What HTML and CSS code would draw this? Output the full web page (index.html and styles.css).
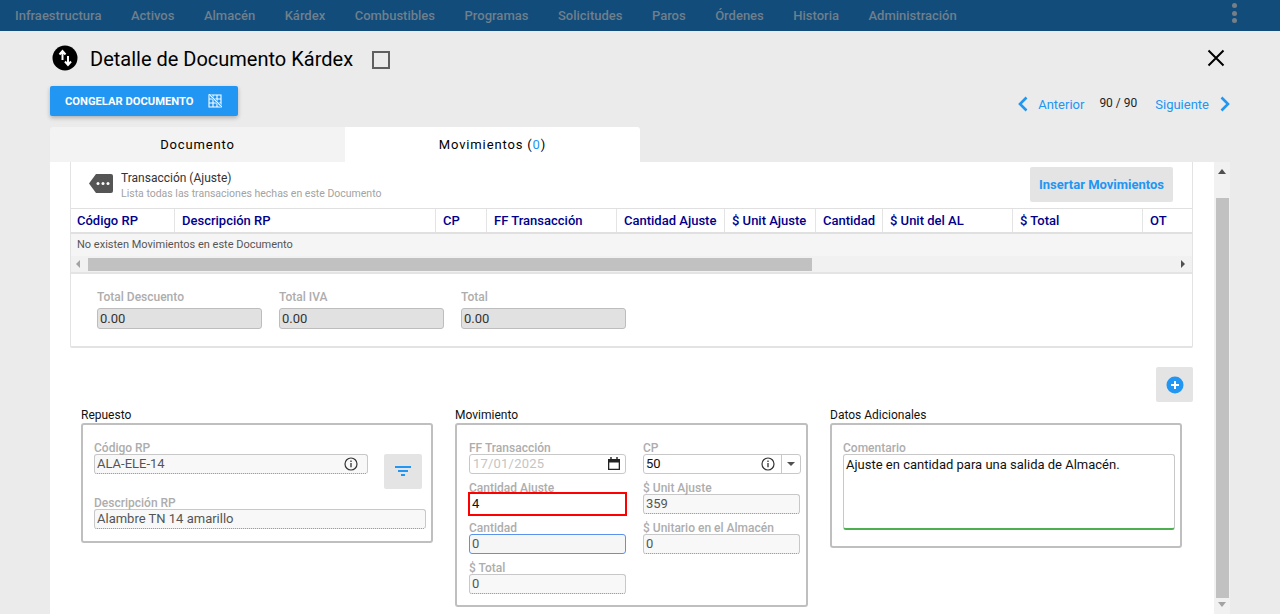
FILE: index.html
```html
<!DOCTYPE html>
<html>
<head>
  <title>Detalle de Documento Kardex</title>
  <link rel="stylesheet" href="styles.css">
</head>
<body>

<div class="topbar">
  <nav class="menu">
    <span>Infraestructura</span>
    <span>Activos</span>
    <span>Almacén</span>
    <span>Kárdex</span>
    <span>Combustibles</span>
    <span>Programas</span>
    <span>Solicitudes</span>
    <span>Paros</span>
    <span>Órdenes</span>
    <span>Historia</span>
    <span>Administración</span>
  </nav>
  <div class="kebab"><i></i><i></i><i></i></div>
</div>

<div class="sheet">
  <div class="title-row">
    <svg class="title-icon" viewBox="0 0 26 26" width="26" height="26">
      <circle cx="13" cy="13" r="12.500" fill="#000"/>
      <path d="M10.500 15V6.500M7.500 9.500l3-3.500 3 3.500M16 11v8.500M13 16.500l3 3.500 3-3.500" fill="none" stroke="#fff" stroke-width="2"/>
    </svg>
    <h1>Detalle de Documento Kárdex</h1>
    <div class="check"></div>
    <svg class="close" viewBox="0 0 18 18" width="18" height="18">
      <path d="M1.500 1.500l15 15M16.500 1.500l-15 15" stroke="#000" stroke-width="2" fill="none"/>
    </svg>
  </div>

  <div class="action-row">
    <button class="freeze">
      <span>CONGELAR DOCUMENTO</span>
      <svg viewBox="0 0 14 14" width="14" height="14">
        <path d="M1 1h12v12H1zM1 5h12M1 9h12M5 1v12M9 1v12" fill="none" stroke="#fff" stroke-width="1.100"/>
        <path d="M2 1l12 12" stroke="#2196f3" stroke-width="2.400"/>
        <path d="M1 0l13 13" stroke="#fff" stroke-width="1.100"/>
      </svg>
    </button>
    <div class="pager">
      <svg viewBox="0 0 11 16" width="11" height="16"><path d="M9.500 1.500L3 8l6.500 6.500" fill="none" stroke="#2196f3" stroke-width="2.600"/></svg>
      <a class="pager-prev">Anterior</a>
      <span class="pager-count">90 / 90</span>
      <a class="pager-next">Siguiente</a>
      <svg viewBox="0 0 11 16" width="11" height="16"><path d="M1.500 1.500L8 8l-6.500 6.500" fill="none" stroke="#2196f3" stroke-width="2.600"/></svg>
    </div>
  </div>

  <div class="tabs">
    <div class="tab">Documento</div>
    <div class="tab active">Movimientos (<b>0</b>)</div>
  </div>

  <div class="panel">
    <div class="content">
      <div class="card">
        <div class="card-head">
          <svg class="tag" viewBox="0 0 24 19" width="24" height="19">
            <path d="M7 0h15a2 2 0 0 1 2 2v15a2 2 0 0 1-2 2H7L0 9.500z" fill="#555"/>
            <circle cx="9" cy="9.500" r="1.500" fill="#fff"/><circle cx="14" cy="9.500" r="1.500" fill="#fff"/><circle cx="19" cy="9.500" r="1.500" fill="#fff"/>
          </svg>
          <div class="card-title">
            <div>Transacción (Ajuste)</div>
            <small>Lista todas las transaciones hechas en este Documento</small>
          </div>
          <button class="btn-grey">Insertar Movimientos</button>
        </div>

        <div class="grid-head">
          <div>Código RP</div>
          <div>Descripción RP</div>
          <div>CP</div>
          <div>FF Transacción</div>
          <div>Cantidad Ajuste</div>
          <div>$ Unit Ajuste</div>
          <div>Cantidad</div>
          <div>$ Unit del AL</div>
          <div>$ Total</div>
          <div>OT</div>
        </div>
        <div class="grid-empty">No existen Movimientos en este Documento</div>
        <div class="hscroll">
          <i class="arrow-left"></i>
          <div class="hthumb"></div>
          <i class="arrow-right"></i>
        </div>

        <div class="totals">
          <div class="total">
            <label>Total Descuento</label>
            <div class="total-box">0.00</div>
          </div>
          <div class="total">
            <label>Total IVA</label>
            <div class="total-box">0.00</div>
          </div>
          <div class="total">
            <label>Total</label>
            <div class="total-box">0.00</div>
          </div>
        </div>
      </div>

      <div class="add-row">
        <button class="btn-add">
          <svg viewBox="0 0 18 18" width="18" height="18">
            <circle cx="9" cy="9" r="8.500" fill="#2196f3"/>
            <path d="M9 5v8M5 9h8" stroke="#fff" stroke-width="2"/>
          </svg>
        </button>
      </div>

      <div class="groups">
        <div class="group">
          <div class="group-name">Repuesto</div>
          <div class="group-box repuesto">
            <div class="rp-top">
              <div class="field rp-code">
                <label>Código RP</label>
                <div class="input locked">ALA-ELE-14
                  <svg class="info" viewBox="0 0 14 14" width="14" height="14"><circle cx="7" cy="7" r="6" fill="none" stroke="#333" stroke-width="1.200"/><path d="M7 6v4.200M7 3.600v1.300" stroke="#333" stroke-width="1.300"/></svg>
                </div>
              </div>
              <button class="btn-filter">
                <svg viewBox="0 0 16 10" width="16" height="10"><path d="M0 1h16M3 5h10M6 9h4" stroke="#2196f3" stroke-width="2"/></svg>
              </button>
            </div>
            <div class="field">
              <label>Descripción RP</label>
              <div class="input locked">Alambre TN 14 amarillo</div>
            </div>
          </div>
        </div>

        <div class="group">
          <div class="group-name">Movimiento</div>
          <div class="group-box movimiento">
            <div class="field">
              <label>FF Transacción</label>
              <div class="input date">17/01/2025
                <svg class="cal" viewBox="0 0 12 13" width="12" height="13"><path d="M0 2h12v11H0zM1.300 5.500v6.200h9.400V5.500z" fill="#222" fill-rule="evenodd"/><path d="M3 0v2M9 0v2" stroke="#222" stroke-width="1.400"/></svg>
              </div>
            </div>
            <div class="field">
              <label>CP</label>
              <div class="input select">50
                <svg class="info" viewBox="0 0 14 14" width="14" height="14"><circle cx="7" cy="7" r="6" fill="none" stroke="#333" stroke-width="1.200"/><path d="M7 6v4.200M7 3.600v1.300" stroke="#333" stroke-width="1.300"/></svg>
                <span class="select-btn"><i></i></span>
              </div>
            </div>
            <div class="field">
              <label>Cantidad Ajuste</label>
              <div class="input required">4</div>
            </div>
            <div class="field">
              <label>$ Unit Ajuste</label>
              <div class="input locked">359</div>
            </div>
            <div class="field">
              <label>Cantidad</label>
              <div class="input locked focused">0</div>
            </div>
            <div class="field">
              <label>$ Unitario en el Almacén</label>
              <div class="input locked">0</div>
            </div>
            <div class="field">
              <label>$ Total</label>
              <div class="input locked">0</div>
            </div>
          </div>
        </div>

        <div class="group">
          <div class="group-name">Datos Adicionales</div>
          <div class="group-box adicionales">
            <div class="field">
              <label>Comentario</label>
              <div class="textarea">Ajuste en cantidad para una salida de Almacén.</div>
            </div>
          </div>
        </div>
      </div>
    </div>

    <div class="vscroll">
      <i class="arrow-up"></i>
      <div class="vthumb"></div>
      <i class="arrow-down"></i>
    </div>
  </div>
</div>

</body>
</html>
```

FILE: styles.css
```css
* { box-sizing: border-box; }

html, body {
  margin: 0;
  height: 614px;
  overflow: hidden;
}
body {
  background-color: #ebebeb;
  font-family: Roboto, "Liberation Sans", sans-serif;
  font-size: 13px;
  color: #000;
}
button {
  border: 0;
  font-family: inherit;
  padding: 0;
}

/* top bar */
.topbar {
  height: 31px;
  background-color: #124c7b;
  display: flex;
  align-items: center;
  padding: 0 43px 0 15px;
}
.menu {
  display: flex;
  gap: 29.500px;
  flex: 1;
  font-size: 13px;
  font-weight: 500;
  color: #6f7f8b;
}
.kebab {
  display: flex;
  flex-direction: column;
  gap: 2.500px;
  margin-top: -5px;
}
.kebab i {
  width: 5px;
  height: 5px;
  border-radius: 50%;
  background-color: #757f88;
}

/* title and actions */
.sheet {
  height: 583px;
  display: flex;
  flex-direction: column;
  padding-left: 50px;
}
.title-row {
  height: 55px;
  display: flex;
  align-items: center;
  padding: 0 55px 0 2px;
}
.title-icon { margin-top: -2px; }
h1 {
  margin: 0 0 0 12px;
  font-size: 20px;
  font-weight: 400;
}
.check {
  width: 18px;
  height: 18px;
  border: 2px solid #5f5f5f;
  margin: 2px 0 0 19px;
}
.close {
  margin-left: auto;
  margin-top: -2px;
}
.action-row {
  height: 41px;
  display: flex;
  padding-right: 49px;
}
.freeze {
  width: 188px;
  height: 30px;
  background-color: #2196f3;
  color: #fff;
  font-size: 11.200px;
  font-weight: 700;
  border-radius: 2px;
  box-shadow: 0 2px 4px rgba(0,0,0,.25);
  display: flex;
  align-items: center;
  gap: 15px;
  padding-left: 15px;
}
.pager {
  margin-left: auto;
  height: 36px;
  display: flex;
  align-items: center;
  color: #2196f3;
}
.pager-prev { margin-left: 10px; }
.pager-count {
  color: #222;
  font-size: 12px;
  margin: -3px 18px 0 15px;
}
.pager-next { margin-right: 11px; }

/* tabs */
.tabs {
  display: flex;
  height: 35px;
  flex: none;
}
.tab {
  width: 295px;
  background-color: #f3f3f3;
  border-radius: 3px 0 0 0;
  display: flex;
  align-items: center;
  justify-content: center;
  letter-spacing: .85px;
}
.tab.active {
  background-color: #fff;
  border-radius: 0 3px 0 0;
}
.tab b {
  color: #2196f3;
  font-weight: 400;
}

/* scroll panel */
.panel {
  flex: 1;
  min-height: 0;
  display: flex;
  width: 1180px;
  overflow: hidden;
}
.content {
  width: 1164px;
  background-color: #fff;
  padding: 0 21px 0 20px;
}
.vscroll {
  width: 16px;
  background-color: #f1f1f1;
  display: flex;
  flex-direction: column;
  align-items: center;
  padding-top: 7px;
}
.vthumb {
  width: 13px;
  height: 400px;
  background-color: #c1c1c1;
  margin: 24px 0 4px 0;
}
.arrow-up, .arrow-down, .arrow-left, .arrow-right {
  display: block;
  width: 0;
  height: 0;
  border: 4px solid transparent;
}
.arrow-up { border-top: 0; border-bottom: 5px solid #505050; }
.arrow-down { border-bottom: 0; border-top: 5px solid #a3a3a3; }
.arrow-left { border-left: 0; border-right: 4px solid #a3a3a3; }
.arrow-right { border-right: 0; border-left: 4px solid #505050; }

/* transaction card */
.card {
  height: 186px;
  border: solid #e3e3e3;
  border-width: 0 1px 2px 1px;
  border-radius: 0 0 2px 2px;
}
.card-head {
  height: 46px;
  display: flex;
  padding: 5px 19px 0 18px;
}
.tag { margin-top: 7px; }
.card-title {
  margin: 4px 0 0 8px;
  flex: 1;
  line-height: 15px;
  font-size: 12px;
  color: #333;
}
.card-title small {
  display: block;
  font-size: 10.500px;
  color: #a3a3a3;
}
.btn-grey {
  width: 143px;
  height: 35px;
  background-color: #e4e4e4;
  color: #2196f3;
  font-size: 13px;
  font-weight: 700;
  border-radius: 2px;
}
.grid-head {
  height: 26px;
  display: grid;
  grid-template-columns: 103px 261px 51px 130px 108px 91px 67px 130px 130px 1fr;
  border: solid #e0e0e0;
  border-width: 1px 0 2px 0;
  color: #00008b;
  font-weight: 500;
  font-size: 13px;
  line-height: 23px;
}
.grid-head div {
  padding-left: 7px;
  border-left: 1px solid #e4e4e4;
}
.grid-head div:first-child {
  border-left: 0;
  padding-left: 6px;
}
.grid-empty {
  height: 22px;
  background-color: #f5f5f5;
  padding-left: 6px;
  font-size: 11px;
  line-height: 22px;
  color: #555;
}
.hscroll {
  height: 18px;
  background-color: #f1f1f1;
  border-bottom: 2px solid #e4e4e4;
  display: flex;
  align-items: center;
  padding: 0 7px 0 5px;
}
.hthumb {
  width: 724px;
  height: 13px;
  background-color: #c1c1c1;
  margin: 0 auto 0 8px;
}
.totals {
  display: flex;
  gap: 17px;
  padding: 16px 0 0 26px;
}
.total label {
  display: block;
  font-size: 12px;
  font-weight: 500;
  color: #adadad;
  line-height: 14px;
  margin-bottom: 4px;
}
.total-box {
  width: 165px;
  height: 21px;
  background-color: #e1e1e1;
  border: 1px solid #bdbdbd;
  border-radius: 3px;
  padding-left: 2px;
  line-height: 19px;
  color: #333;
}
.add-row {
  display: flex;
  justify-content: flex-end;
  margin-top: 19px;
}
.btn-add {
  width: 37px;
  height: 35px;
  background-color: #e4e4e4;
  border-radius: 2px;
  display: flex;
  align-items: center;
  justify-content: center;
}

/* field groups */
.groups {
  display: grid;
  grid-template-columns: 352px 353px 352px;
  gap: 22px;
  margin: 6px 11px 0 11px;
  align-items: start;
}
.group-name {
  font-size: 12px;
  line-height: 15px;
  color: #111;
}
.group-box {
  border: 2px solid #bfbfbf;
  border-radius: 3px;
  padding: 17px 5px 0 11px;
}
.group-box.repuesto { height: 120px; }
.group-box.movimiento {
  height: 184px;
  display: grid;
  grid-template-columns: 157px 157px;
  column-gap: 17px;
  row-gap: 8px;
  align-content: start;
  padding-left: 12px;
}
.group-box.adicionales { height: 125px; }
.rp-top {
  display: flex;
  justify-content: space-between;
  height: 49px;
  padding-right: 4px;
}
.rp-code { width: 274px; }
.btn-filter {
  width: 38px;
  height: 35px;
  margin-top: 12px;
  background-color: #e4e4e4;
  border-radius: 2px;
}
.rp-top + .field { margin-top: 6px; }
.field label {
  display: block;
  font-size: 12px;
  font-weight: 500;
  line-height: 13px;
  margin-bottom: -1px;
  color: #adadad;
}
.input {
  height: 20px;
  display: flex;
  align-items: center;
  padding: 0 0 1px 2px;
  font-size: 13px;
  color: #111;
  border: 1px solid #c8c8c8;
  border-radius: 3px;
  background-color: #fff;
}
.input.locked {
  background-color: #f8f8f8;
  border-bottom: 1px dotted #888;
  color: #555;
}
.input.date {
  color: #c4c4c4;
  letter-spacing: .2px;
  padding-left: 3px;
}
.input.required {
  border: 2px solid #f00;
  border-radius: 0;
  height: 24px;
  /* top margin collapses with the label's -1px */
  margin: -3px -1px -2px -1px;
  color: #111;
  padding-left: 2px;
  position: relative;
}
.input.focused {
  border: 1px solid #5b93ec;
  background-color: #f6f6f6;
}
.info { margin-left: auto; margin-right: 9px; }
.cal { margin-left: auto; margin-right: 5px; }
.select { margin-right: -1px; }
.select .info { margin-right: 6px; }
.select-btn {
  width: 19px;
  height: 18px;
  margin-bottom: -1px;
  border-left: 1px solid #c8c8c8;
  display: flex;
  align-items: center;
  justify-content: center;
}
.select-btn i {
  border: 4px solid transparent;
  border-bottom: 0;
  border-top: 4px solid #505050;
}
.textarea {
  width: 332px;
  height: 76px;
  border: 1px solid #c8c8c8;
  border-bottom: 2px solid #4caf50;
  border-radius: 3px;
  padding: 2px 2px;
  font-size: 13px;
  line-height: 16px;
  color: #111;
}
```
